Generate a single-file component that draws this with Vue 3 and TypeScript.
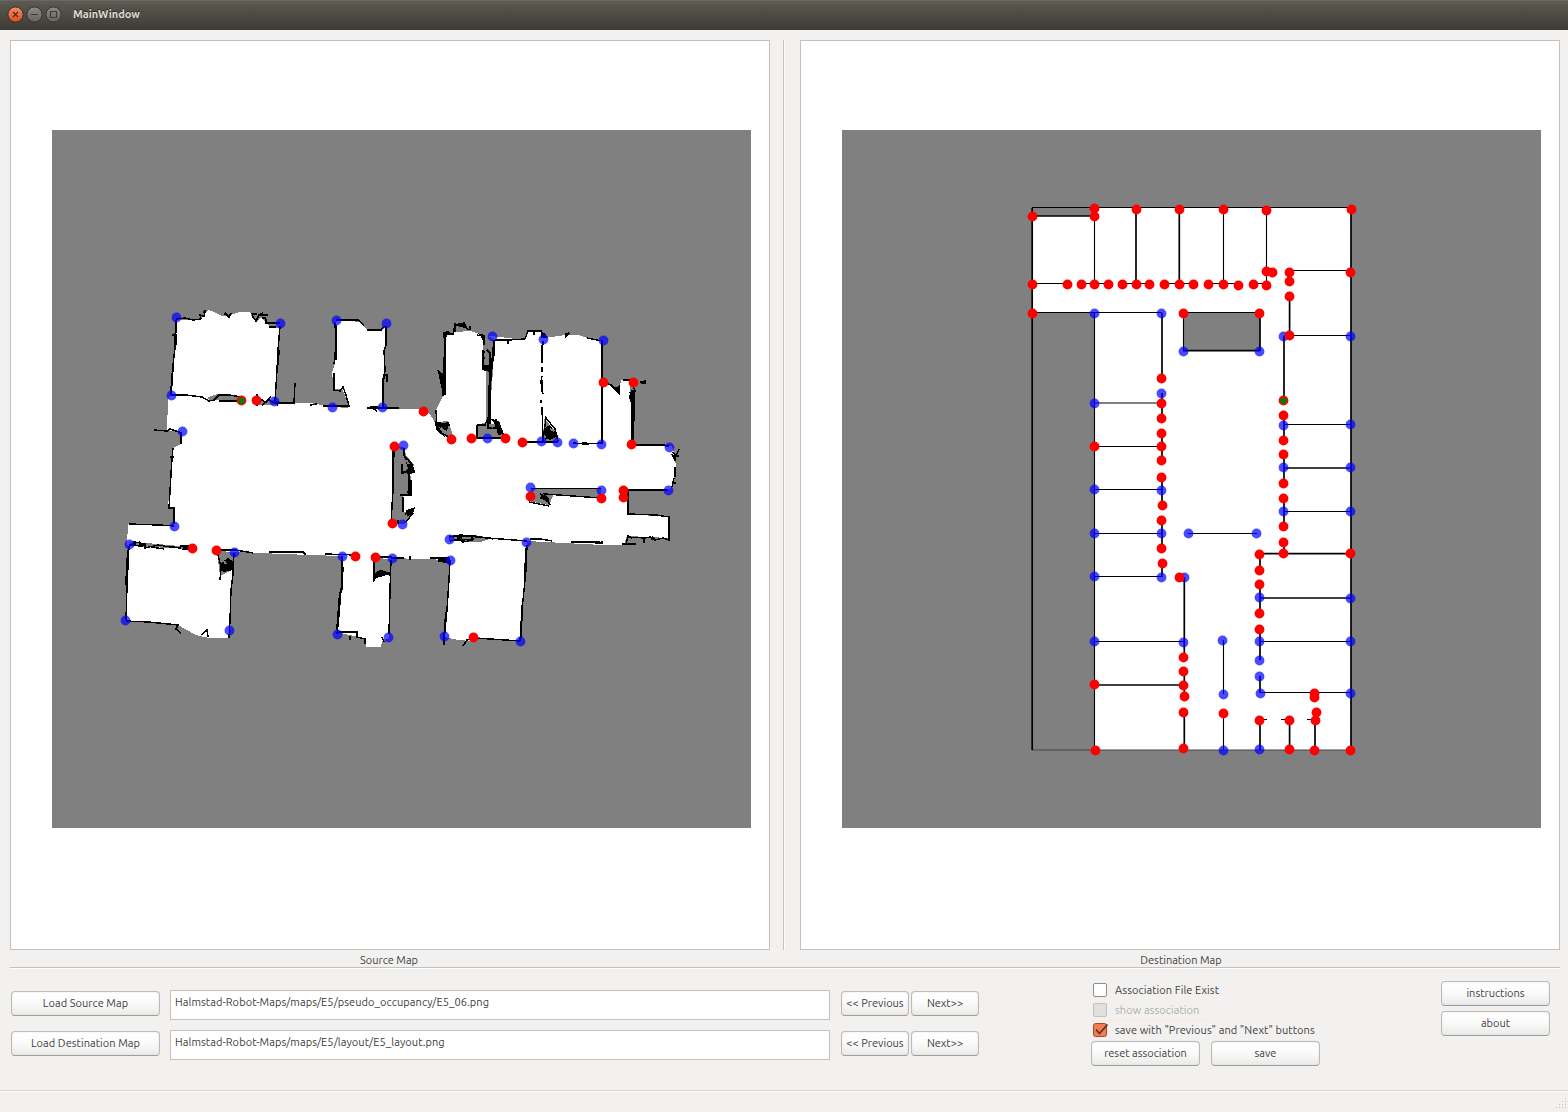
<script setup lang="ts">
type Pt = [number, number]

const pairs = (s: string): Pt[] =>
  s.trim().split(/\s+/).map((p) => p.split(',').map(Number) as Pt)

const sourceBlue = pairs(`176,317 280,323 171,395 274,401 182,431 336,320 386,323 332,407 382,407
  492,336 543,339 603,340 487,438 541,441 557,442 573,443 601,444 669,447 668,490 403,445 402,524
  530,487 601,490 449,539 526,542 450,560 129,544 234,552 342,556 392,558 125,620 229,630 337,634
  388,637 444,636 520,641 174,526`)
const sourceRed = pairs(`256,400 423,411 451,439 471,438 505,438 522,442 603,382 633,382 631,444
  394,446 392,523 530,496 601,498 623,490 623,497 192,548 216,550 355,556 375,557 473,637`)

const destBlue = pairs(`1094,313 1161,313 1183,351 1259,351 1283,336 1350,336 1161,393 1094,403
  1094,489 1161,490 1094,533 1161,533 1188,533 1256,533 1283,425 1350,424 1283,467 1350,467
  1283,511 1350,511 1094,576 1161,577 1184,577 1094,641 1183,642 1222,640 1223,694 1223,750
  1259,597 1350,598 1259,641 1350,641 1259,660 1259,676 1260,693 1350,693 1259,749`)
const destRed = pairs(`1094,208 1032,216 1094,216 1136,209 1179,209 1223,209 1266,210 1351,209
  1032,284 1067,284 1081,284 1094,284 1108,284 1122,284 1136,284 1149,284 1164,284 1179,284 1193,284
  1208,284 1223,284 1238,285 1253,284 1266,285 1266,271 1272,272 1289,272 1289,281 1289,296 1289,335
  1350,272 1032,313 1183,313 1259,313 1161,378 1161,403 1161,418 1161,433 1161,446 1161,460 1161,477
  1162,505 1161,520 1161,548 1162,563 1094,446 1283,415 1283,440 1283,454 1283,483 1283,498 1283,526
  1283,542 1283,553 1259,554 1350,553 1259,570 1259,584 1259,613 1259,629 1179,577 1183,657 1183,671
  1183,685 1184,696 1183,712 1183,748 1094,684 1095,750 1223,713 1259,720 1289,720 1289,749 1314,693
  1314,697 1316,712 1315,720 1314,750 1350,750`)

const thinWalls = `M1032 207.5H1351M1094.5 208V284M1094.5 313V750M1032 283.5H1068M1080 283.5H1108M1122 283.5H1149M1164 283.5H1193
  M1208 283.5H1238M1253 283.5H1266M1223.5 208V284M1266.5 208V285M1290 270.5H1351M1032 312.5H1162
  M1183 312.5H1260M1183.5 313V351M1284 335.5H1351M1094 446.5H1161M1188 533.5H1257M1094 533.5H1161
  M1284 424.5H1351M1094 576.5H1161M1094 641.5H1184M1223.5 640V694M1223.5 713V750M1259 641.5H1351
  M1260 692.5H1351M1259 719.5H1267M1281 719.5H1290M1307 719.5H1315M1094 403H1161M1094 489.5H1161M1284 511.5H1351`
const thickWalls = `M1032.2 208V750M1351 208V750M1032 216H1094M1136 208V284M1179.3 208V284M1289.6 272V281M1289.6 296V336
  M1162 313V378M1162 393V418M1162 433V460M1162 477V505M1162 520V548M1162 563V577M1183 350.7H1260M1260 313V351
  M1284 336V400M1284 415V440M1284 454V483M1284 498V526M1284 542V553M1260 553.6H1351M1284 468H1351M1260 554V570
  M1260 584V613M1260 629V660M1260 676V693M1260 598H1351M1184.3 577V657M1184.3 671V697M1184.3 712V748
  M1094 685H1184M1260 720V750M1289.6 720V750M1315 712V750`

const floor = `M177 320L201 320 204 314 208 310 212 311 218 314 222 316 229 316 236 313 240 312 250 312 253 319
  258 321 261 317 266 323 270 327 280 328 279 350 277 370 275 403 310 403 333 407 348 408 349 404 342 389 334 389
  332 373 335 363 335 325 338 320 360 322 367 330 382 330 386 326 385 350 384 375 382 409 424 409 430 414
  436 424 436 410 443 396 444 365 446 334 455 332 470 331 482 335 525 340 528 331 540 331 545 338 565 335
  578 335 590 339 603 341 603 382 612 386 619 393 621 380 626 379 630 383 632 444 672 446 675 455 676 470
  673 485 668 490 628 490 628 514 669 517 669 538 627 536 624 545 602 545 527 541 526 570 524 590 521 641
  474 637 472 641 458 640 445 637 451 560 391 558 389 638 382 641 381 647 366 647 365 640 358 637 337 632
  343 556 309 555 234 552 232 574 230 634 228 638 209 638 196 635 178 625 126 620 129 547 127 544 128 524
  174 526 174 508 168 508 170 480 173 448 181 444 182 433 167 430 168 400 171 395 173 365Z`

const shadows = [
  'M484 333L495 340 493 370 489 424 500 424 503 438 476 438 477 424 486 423 486 371 482 370Z',
  'M437 422L448 421 453 435 449 438 440 434Z',
  'M544 418L555 431 559 442 543 441Z',
  'M394 447L404 447 406 455 414 465 410 470 412 495 403 496 403 512 413 510 405 524 391 523Z',
  'M531 489L601 489 601 498 554 494 549 505 528 501Z',
  'M628 490H668V492L669 516 628 514Z',
  'M629 538L627 545 644 541 669 538Z',
  'M217 551L234 552 232 570 220 576Z',
  'M374 558L392 559 391 573 374 578Z',
  'M449 535L474 535 493 538 480 542 449 541Z',
  'M208 397L218 394 241 396 241 402 218 400 209 401Z',
  'M129 542L146 543 190 547 190 549 150 547 131 546Z',
  'M257 396L263 401 274 400 274 405 257 405Z',
]

// Scanned wall edges, recorded as short strokes
const scan = `M176 319L185 318 193 320 201 319M201 319L200 315 204 316 205 310M225 313L229 317 231 313M252 313L253 317 256 321
  259 315 263 313M260 315H267M266 319V323H280M269 327H276M176 320L175 348 173 365 171 395M172 335H176V345M280 326L278 350 277 370 275 401
  M171 395L186 395 202 397 209 401 214 400 219 395 230 395 241 397M219 401H241M257 394V406M259 398L265 402 271 397M262 405L269 400 278 405
  M274 402L294 403 294 402M294 403L295 383M154 430L167 431 170 429 182 433M181 433V444M173 448L172 458 169 508M170 457H174
  M168 508H174V524M174 526L159 525 129 524M129 545L145 544 145 548 158 545 170 547 192 548M139 542L145 546M180 546H192M151 547L164 549
  M129 546L127 585 126 620M126 621L149 622 178 625 176 629 181 633M201 635L207 630 208 637M234 553L233 574 231 590 230 620 229 638
  M217 551L221 567 220 580M221 567L229 560 233 562 229 568 233 569M216 550L236 550 253 553M225 566H232M269 552L303 552 306 555
  M325 554L356 555M391 558H404M410 556V560M374 557H392M374 557V580L382 571 391 576M377 573L390 573M342 556L343 570 341 590 339 615 337 634
  M338 632H357V637L365 639V644M350 636V640M391 560L390 590 389 634M382 637L384 642M450 560L449 580 447 610 444 640M444 640V645
  M430 558H449M438 561H450M463 646L467 640 475 638 520 641M527 545L526 570 524 590 522 610 520 641M449 537L460 535 474 536 493 539
  M450 541L460 539 463 542 473 540M475 537L527 541M530 539L541 539 552 541M571 542L602 543V541M622 544H636M626 544L628 536 632 538M627 537L645 538
  650 537 655 540 663 538 669 540M644 537V542M652 537L656 540M669 541V517L656 515 628 514V491M628 490H668M631 444L669 446
  M673 452L676 456 679 449M672 454L675 460M676 455L675 461M675 467V477M674 478L672 487M335 323L336 345 334 364M336 320H358L364 325M360 321L362 324
  M367 330H381L384 326M386 326L386 345 384 351 385 370 383 385 383 407M383 375H387V382M334 373V390L340 391 343 387 346 395 349 406H323
  M367 408H399M371 407L377 411M374 409L380 407M310 405L317 404M437 425L436 410M443 396L444 365 445 334M438 370L444 380M446 332L453 334 455 324 460 326
  464 323 468 330M455 332L456 325M446 334H452M477 335L483 336 484 345M483 350V370M487 350L490 353V370L488 424M484 368L489 371M494 340L494 355 491 370 490 424
  M477 425H485L488 418 496 421 501 430 505 438M477 425V438H505M488 423V428H496V419M437 422L440 432 447 436 453 438M440 425H450
  M495 340H508L525 339M508 340V344M525 339L528 331H541L546 338M534 332V335M566 333V336L569 333M587 338L602 341M543 341L542 358 542 363
  M542 367V372M542 376L541 382 543 394M541 400V403M542 407L543 441M543 441L546 418 555 429 558 441M545 439L551 435 548 430 556 435M522 442H558
  M573 443L585 444 602 443M602 341V444M604 382L611 385 619 393V386M623 380H631M632 384L635 391 632 402 633 409 633 444M630 392L634 399V421
  M640 382H645M645 380V384M394 448L393 490 391 523M404 448V455L411 464 414 471M402 472H415M402 464V474M409 472V495M411 480V495H400M403 497V512
  M405 514L413 509M413 513L406 522M398 520V524M531 488.5H601M545 494L601 498M529 502L549 506M544 493L550 505`

// Long walls that read two pixels wide
const bold = `M602 342V444M632 402V444M522 442H558M336 325V360M445 336V395M340 592L337 630M446 612L444 640
  M176 322L175 345M173 366L171 393M279 350L277 370M181 434V443M128 550L126 585M386 328V345M383 378V404
  M526 548L525 578M522 605L521 638M494 342L491 375M489 385V423M542 345V360M542 380V392
  M393 450V490M342 560V590M276 403H294M630 490H665M634 445H665M571 542H600`

const heavy = [
  'M180 546L192 545 192 551 178 549Z', 'M221 563L228 558 233 562 233 570 224 572 220 570Z', 'M438 371L444 374 444 398 440 382Z',
  'M435 421L443 423 449 422 447 431 439 427 445 437 436 430Z', 'M488 419L499 421 504 434 498 435 496 426 493 421Z',
  'M443 332L449 331 447 337 443 338Z', 'M458 323L465 323 467 329 459 326Z', 'M477 333L485 335 485 344 481 337Z',
  'M482 365L489 365 489 371 484 371Z', 'M544 430L549 424 558 436 550 440 546 438Z', 'M403 454L412 463 415 471 402 474 408 468Z',
  'M406 510L415 507 413 514 407 516Z', 'M540 493L549 498 549 503 542 499Z', 'M545 333L548 338 541 338 541 332Z',
  'M631 390L635 390 635 399 631 404 629 397Z', 'M374 574L377 571 381 570 390 573 384 576 376 578Z', 'M133 541L143 543 143 547 132 546Z',
  'M452 536L473 536 474 540 456 541Z', 'M438 559L450 558 450 564 440 562Z', 'M617 387L620 384 620 394 611 387Z',
]
const debris = 'M203 312H206M202 316H205M224 314H227M253 314H257M264 315H268M262 318H266M370 407H378M407 473H412M407 492H412M673 456H679M672 483H676M582 443H587M645 383H641M454 325H458M470 326V330M482 352H485M483 358H485M173 335H176M631 418H635M651 539H655M644 540V543M540 498H548'
const gaps = 'M550 429L554 431M441 428L446 432M489 425L493 427M224 561L226 564M406 460L409 464M547 424L549 426M443 430L448 434M454 538H457M462 538H471M136 544H139M181 548H183M222 398H238'

const star = (x: number, y: number) =>
  Array.from({ length: 10 }, (_, i) => {
    const r = i % 2 ? 2.7 : 4.3
    const a = (i * Math.PI) / 5 - Math.PI / 2
    return `${(x + r * Math.cos(a)).toFixed(1)},${(y + r * Math.sin(a)).toFixed(1)}`
  }).join(' ')

const rows = [
  { load: 'Load Source Map', cls: 'src', path: 'Halmstad-Robot-Maps/maps/E5/pseudo_occupancy/E5_06.png' },
  { load: 'Load Destination Map', cls: 'dst', path: 'Halmstad-Robot-Maps/maps/E5/layout/E5_layout.png' },
]
</script>

<template>
  <div class="window">
    <header class="titlebar">
      <svg class="lights" width="60" height="22" viewBox="0 0 60 22">
        <defs>
          <linearGradient id="og" x1="0" y1="0" x2="0" y2="1"><stop offset="0" stop-color="#f58a68" /><stop offset="1" stop-color="#e0501c" /></linearGradient>
          <linearGradient id="gg" x1="0" y1="0" x2="0" y2="1"><stop offset="0" stop-color="#8d8c84" /><stop offset="1" stop-color="#65645d" /></linearGradient>
        </defs>
        <circle cx="9.5" cy="10.5" r="7.6" fill="url(#og)" stroke="#33322d" />
        <circle cx="28.5" cy="10.5" r="7.6" fill="url(#gg)" stroke="#33322d" />
        <circle cx="47.5" cy="10.5" r="7.6" fill="url(#gg)" stroke="#33322d" />
        <path d="M7 8L12 13M12 8L7 13" stroke="#5b2513" stroke-width="1.3" />
        <path d="M25 10.5H32M44.5 7.5H50.5V13.5H44.5Z" fill="none" stroke="#3c3b37" stroke-width="1.2" />
      </svg>
      <span class="title">MainWindow</span>
    </header>

    <main class="views">
      <div class="view">
        <svg width="699" height="698" viewBox="52 130 699 698">
          <rect x="52" y="130" width="699" height="698" fill="#808080" />
          <g shape-rendering="crispEdges">
            <path :d="floor" fill="#fff" />
            <path v-for="(d, i) in shadows" :key="i" :d="d" fill="#808080" />
            <path :d="scan" fill="none" stroke="#000" stroke-width="1.45" />
            <path :d="bold" fill="none" stroke="#000" stroke-width="2" />
            <path v-for="(d, i) in heavy" :key="i" :d="d" fill="#000" />
            <path :d="debris" fill="none" stroke="#000" stroke-width="2.4" />
            <path :d="gaps" fill="none" stroke="#808080" stroke-width="2" />
          </g>
          <circle v-for="(p, i) in sourceBlue" :key="'b' + i" class="blue" :cx="p[0] + 0.5" :cy="p[1] + 0.5" r="4.9" />
          <circle v-for="(p, i) in sourceRed" :key="'r' + i" class="red" :cx="p[0] + 0.5" :cy="p[1] + 0.5" r="4.9" />
          <circle class="red" cx="241.5" cy="400.5" r="4.9" />
          <polygon :points="star(241.5, 400.7)" fill="#008000" />
        </svg>
      </div>
      <div class="splitter"></div>
      <div class="view">
        <svg width="699" height="698" viewBox="842 130 699 698">
          <rect x="842" y="130" width="699" height="698" fill="#808080" />
          <path d="M1032 216H1094V208H1351V750H1094V313H1032Z" fill="#fff" />
          <rect x="1183" y="313" width="77" height="38" fill="#808080" />
          <path d="M1032 750H1351" stroke="#444" stroke-width="1" fill="none" />
          <path :d="thinWalls" fill="none" stroke="#000" stroke-width="1.1" />
          <path :d="thickWalls" fill="none" stroke="#000" stroke-width="1.7" />
          <circle v-for="(p, i) in destBlue" :key="'b' + i" class="blue" :cx="p[0] + 0.5" :cy="p[1] + 0.5" r="4.9" />
          <circle v-for="(p, i) in destRed" :key="'r' + i" class="red" :cx="p[0] + 0.5" :cy="p[1] + 0.5" r="4.9" />
          <circle class="red" cx="1283.5" cy="400.5" r="4.9" />
          <polygon :points="star(1283.5, 400.7)" fill="#008000" />
        </svg>
      </div>
    </main>

    <div class="captions">
      <div class="cap"><span>Source Map</span></div>
      <div class="cap"><span>Destination Map</span></div>
    </div>

    <section class="controls">
      <div class="files">
        <div v-for="r in rows" :key="r.cls" class="row">
          <button class="btn load"><span>{{ r.load }}</span></button>
          <div class="path"><span :class="r.cls">{{ r.path }}</span></div>
          <button class="btn nav prev"><span>&lt;&lt; Previous</span></button>
          <button class="btn nav"><span>Next&gt;&gt;</span></button>
        </div>
      </div>
      <div class="options">
        <label class="check"><i class="box"></i><span>Association File Exist</span></label>
        <label class="check off"><i class="box"></i><span>show association</span></label>
        <label class="check on">
          <svg class="tick" width="17" height="16" viewBox="0 0 17 16">
            <rect x="1.5" y="1.5" width="13" height="13" rx="2" fill="#f07e52" stroke="#a8472a" />
            <path d="M4 7.5L7.5 11.5L15.5 2.5" fill="none" stroke="#5e2f22" stroke-width="1.8" />
          </svg>
          <span>save with "Previous" and "Next" buttons</span>
        </label>
        <div class="pair">
          <button class="btn act"><span>reset association</span></button>
          <button class="btn act"><span>save</span></button>
        </div>
      </div>
      <div class="help">
        <button class="btn act"><span>instructions</span></button>
        <button class="btn act"><span>about</span></button>
      </div>
    </section>

    <footer class="status">
      <svg width="12" height="12" viewBox="0 0 12 12" fill="#c4c2be">
        <path d="M9 0h1v1h-1zM6 3h1v1h-1zM9 3h1v1h-1zM3 6h1v1h-1zM6 6h1v1h-1zM9 6h1v1h-1zM0 9h1v1h-1zM3 9h1v1h-1zM6 9h1v1h-1zM9 9h1v1h-1z" />
      </svg>
    </footer>
  </div>
</template>

<style>
body { background: #f2f1f0; }
</style>

<style scoped>
* { box-sizing: border-box; }
.window {
  width: 1568px; height: 1112px; display: flex; flex-direction: column; overflow: hidden;
  background: #f2f1f0; color: #414141; font: 11px/16px Ubuntu, "Noto Sans", "Open Sans", sans-serif;
}
.titlebar {
  flex: none; height: 30px; display: flex; align-items: flex-start; padding: 4px 0 0 6px;
  background: linear-gradient(#5d5b53, #55534b 20%, #3d3c37); border-top: 1px solid #69675e;
}
.lights { margin-top: -1px; }
.title { margin-left: 7px; line-height: 18px; font-weight: 700; letter-spacing: -0.05px; color: #dfdbd2; text-shadow: 0 -1px #2b2a26; white-space: nowrap; }
.views { flex: none; display: flex; height: 920px; padding: 10px 8px 0 10px; }
.view { width: 760px; height: 910px; border: 1px solid #c3c1bd; background: #fff; padding: 89px 0 0 41px; }
.view svg { display: block; }
.splitter { width: 2px; margin: 0 15px 0 13px; border-left: 1px solid #c6c4c0; border-right: 1px solid #fff; }
.blue { fill: #0000ff; fill-opacity: 0.71; }
.red { fill: #ff0000; }
.captions { flex: none; display: flex; height: 19px; margin: 0 8px 0 10px; padding-top: 2px; border-bottom: 1px solid #fff; box-shadow: inset 0 -1px #c3c1bd; }
.cap { width: 758px; text-align: center; }
.cap + .cap { margin-left: 34px; }
.controls { flex: none; height: 122px; display: flex; border-bottom: 1px solid #d2d0cd; }
.files { display: flex; flex-direction: column; gap: 10px; padding: 21px 0 0 11px; }
.row { display: flex; height: 30px; align-items: flex-start; }
.btn {
  height: 25px; padding: 0 0 1px; border: 1px solid #bdbbb8; border-bottom-color: #9e9c99; border-radius: 4px;
  background: linear-gradient(#fff, #fbfbfb 45%, #ebeae9); box-shadow: inset 0 0 2px #e2e0de; color: inherit; font: inherit;
  margin: 0; white-space: nowrap; overflow: hidden;
}
.btn span { display: block; text-align: center; }
.row .btn { margin-top: 1px; }
.row .load { width: 149px; margin-right: 10px; }
.load span { letter-spacing: 0.05px; }
.path { width: 660px; height: 30px; border: 1px solid #c3c1bd; background: #fff; padding: 3px 4px; margin-right: 11px; color: #3c3c3c; white-space: nowrap; letter-spacing: 0.075px; }
.nav { width: 68px; }
.row .prev { margin-right: 2px; }
.options { margin-left: 112px; width: 230px; padding-top: 11px; }
.check { display: flex; height: 20px; align-items: center; white-space: nowrap; letter-spacing: 0.07px; }
.box { width: 14px; height: 14px; margin: 0 8px 0 2px; border: 1px solid #908e8a; border-radius: 2px; background: #fff; }
.off { color: #b1aeaa; }
.off .box { background: #e1e0de; border-color: #c3c1be; }
.on { background: linear-gradient(90deg, #ffe4da, #ffe4da) 0 0 / 120px 1px no-repeat; }
.tick { margin: 0 6px 0 1px; }
.pair { display: flex; gap: 11px; margin-top: 1px; }
.act { width: 109px; }
.help { margin-left: 120px; padding-top: 12px; display: flex; flex-direction: column; gap: 5px; }
.status { flex: 1; border-top: 1px solid #fff; display: flex; align-items: flex-end; justify-content: flex-end; padding-bottom: 2px; }
</style>
